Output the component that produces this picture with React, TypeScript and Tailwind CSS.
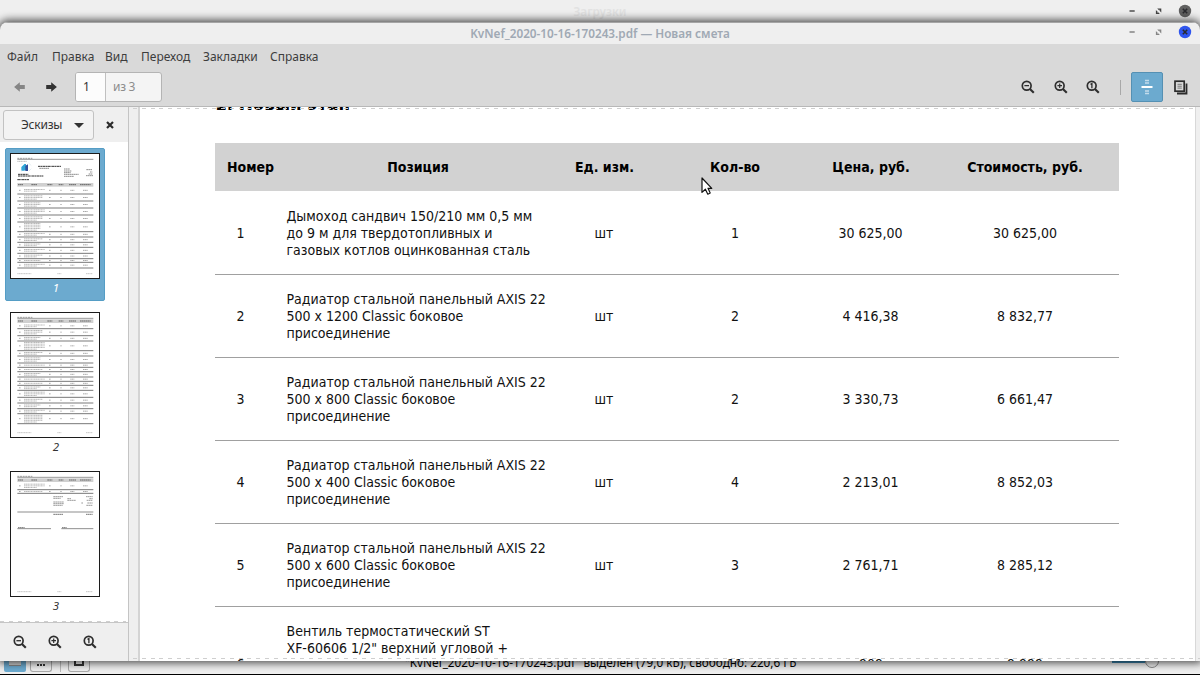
import type { ReactNode } from 'react';

interface Item {
  id: number;
  lines: string[];
  qty: string;
  price: string;
  total: string;
}

const items: Item[] = [
  { id: 1, lines: ['Дымоход сандвич 150/210 мм 0,5 мм', 'до 9 м для твердотопливных и', 'газовых котлов оцинкованная сталь'], qty: '1', price: '30 625,00', total: '30 625,00' },
  { id: 2, lines: ['Радиатор стальной панельный AXIS 22', '500 x 1200 Classic боковое', 'присоединение'], qty: '2', price: '4 416,38', total: '8 832,77' },
  { id: 3, lines: ['Радиатор стальной панельный AXIS 22', '500 x 800 Classic боковое', 'присоединение'], qty: '2', price: '3 330,73', total: '6 661,47' },
  { id: 4, lines: ['Радиатор стальной панельный AXIS 22', '500 x 400 Classic боковое', 'присоединение'], qty: '4', price: '2 213,01', total: '8 852,03' },
  { id: 5, lines: ['Радиатор стальной панельный AXIS 22', '500 x 600 Classic боковое', 'присоединение'], qty: '3', price: '2 761,71', total: '8 285,12' },
];

const menu = [
  { label: 'Файл', width: 'w-[31px]' },
  { label: 'Правка', width: 'w-[39px]' },
  { label: 'Вид', width: 'w-[22px]' },
  { label: 'Переход', width: 'w-[48px]' },
  { label: 'Закладки', width: 'w-[53px]' },
  { label: 'Справка', width: 'w-[46px]' },
];

const columns = 'grid grid-cols-[71px_264px_109px_152px_120px_188px]';

function ZoomIcon({ kind }: { kind: 'out' | 'in' | 'one' }) {
  return (
    <svg width="14" height="14" viewBox="0 0 14 14" fill="none" stroke="#2e2e2e">
      <circle cx="5.7" cy="5.7" r="4.4" strokeWidth="1.7" />
      <path d="M8.9 8.9L12.8 12.8" strokeWidth="2.1" />
      {kind === 'out' && <path d="M3.4 5.7H8" strokeWidth="1.3" />}
      {kind === 'in' && <path d="M3.4 5.7H8M5.7 3.4V8" strokeWidth="1.2" />}
      {kind === 'one' && <path d="M4.5 4.3L5.9 3.6V8.2" strokeWidth="1.3" />}
    </svg>
  );
}

function ArrowIcon({ className }: { className: string }) {
  return (
    <svg width="11" height="10" viewBox="0 0 11 10" className={className}>
      <path d="M0.1 5L5.8 0.2V3H10.8V7H5.8V9.8Z" fill="currentColor" />
    </svg>
  );
}

function WindowButtons({ active }: { active: boolean }) {
  const color = active ? '#858585' : '#444444';
  return (
    <svg width="64" height="14" viewBox="0 0 64 14" fill="none">
      <path d="M1.5 7H6.7" stroke={color} strokeWidth="1.4" />
      <path d="M29.2 4.5H33.3V8.6ZM27.9 5.9V9.9H31.9Z" fill={color} />
      <path d="M29.2 8.6L32 5.8" stroke="#efefef" strokeWidth="0.6" />
      <circle cx="57" cy="7" r="6.2" fill={active ? '#2f55ee' : '#606060'} />
      <path d="M54.8 4.8L59.2 9.2M59.2 4.8L54.8 9.2" stroke="#2a2a2e" strokeWidth="1.6" />
    </svg>
  );
}

interface ThumbRow {
  y: number;
  lines: number;
}

const pageOne: ThumbRow[] = [
  { y: 123, lines: 2 },
  { y: 144, lines: 3 },
  { y: 165, lines: 3 },
  { y: 186, lines: 3 },
  { y: 207, lines: 3 },
  { y: 236, lines: 5 },
  { y: 252, lines: 2 },
  { y: 268, lines: 2 },
  { y: 283, lines: 2 },
  { y: 301, lines: 2 },
  { y: 317, lines: 2 },
  { y: 328, lines: 1 },
  { y: 345, lines: 2 },
];

const pageTwo: ThumbRow[] = [
  { y: 50, lines: 2 },
  { y: 71, lines: 3 },
  { y: 87, lines: 2 },
  { y: 116, lines: 5 },
  { y: 132, lines: 2 },
  { y: 153, lines: 3 },
  { y: 166, lines: 1 },
  { y: 179, lines: 1 },
  { y: 195, lines: 2 },
  { y: 208, lines: 1 },
  { y: 220, lines: 1 },
  { y: 235, lines: 2 },
  { y: 256, lines: 3 },
  { y: 273, lines: 2 },
  { y: 290, lines: 2 },
  { y: 305, lines: 2 },
  { y: 335, lines: 5 },
];

const pageThree: ThumbRow[] = [
  { y: 56, lines: 3 },
  { y: 67, lines: 1 },
];

function Rows({ top, rows }: { top: number; rows: ThumbRow[] }) {
  return (
    <g>
      <rect x="22" y={top} width="228" height="11" fill="#d0d0d0" />
      <path d={`M24 ${top + 5}H39M64 ${top + 5}H82M112 ${top + 5}H127M146 ${top + 5}H160M177 ${top + 5}H198M210 ${top + 5}H242`} stroke="#666" strokeWidth="3" strokeDasharray="5 1" />
      {rows.map((row, index) => {
        const prev = index ? rows[index - 1].y : top + 11;
        const mid = (prev + row.y) / 2;
        return (
          <g key={row.y}>
            <rect x="22" y={row.y - 1.5} width="228" height="3" fill="#7a7a7a" />
            {Array.from({ length: row.lines }, (_, n) => (
              <path
                key={n}
                d={`M42 ${mid + (n - (row.lines - 1) / 2) * 5}h${n === row.lines - 1 && n > 0 ? 38 : 62 - (index % 3) * 6}`}
                stroke="#999"
                strokeWidth="2"
                strokeDasharray="5 1 3 1"
              />
            ))}
            <path d={`M27 ${mid}h6M117 ${mid}h6M151 ${mid}h4M181 ${mid}h12M219 ${mid}h15`} stroke="#aaa" strokeWidth="3" strokeDasharray="4 1" />
          </g>
        );
      })}
    </g>
  );
}

function Page({ children }: { children: ReactNode }) {
  return (
    <svg width="90" height="126" viewBox="0 0 270 378" className="block">
      <rect x="1.5" y="1.5" width="267" height="375" fill="#fff" stroke="#1c1c1c" strokeWidth="3" />
      <path d="M22 16H67" stroke="#777" strokeWidth="2" strokeDasharray="6 2" />
      <path d="M22 19H250" stroke="#666" strokeWidth="2" />
      <path d="M22 362H64M142 362H154M228 362H248" stroke="#aaa" strokeWidth="2" strokeDasharray="4 1" />
      {children}
    </svg>
  );
}

function Thumbnails() {
  return (
    <div className="flex h-[480px] flex-col overflow-hidden bg-white pl-[5px] pt-[6px] text-[11.5px] italic leading-[18px]">
      <div className="flex h-[153px] w-[100px] flex-col items-center rounded-[2px] border border-[#559dc5] bg-[#6caacf] pt-1 text-white">
        <Page>
          <path d="M22 25H50" stroke="#999" strokeWidth="2" strokeDasharray="4 1" />
          <path d="M34 42L44 32V53H34ZM44 33L48 33V52H44Z" fill="#31a6d8" />
          <path d="M46 38L54 34V54H46Z" fill="#314f9b" />
          <path d="M32 34L38 31M56 30L64 38M32 52L36 55M57 54L64 47" stroke="#d8e5ec" strokeWidth="2" />
          <path d="M84 40H154M24 64H55M24 69H100M22 80H57" stroke="#333" strokeWidth="3" strokeDasharray="8 1 4 1" />
          <path d="M88 46H118M162 48H179M162 54H184M162 59H182M162 64H206M162 70H192M229 50H247M240 57H247M236 63H247M228 68H249" stroke="#777" strokeWidth="2.5" strokeDasharray="5 1" />
          <Rows top={90} rows={pageOne} />
        </Page>
        <span className="pl-0.5">1</span>
      </div>
      <div className="mt-[11px] flex w-[100px] flex-col items-center text-[#333]">
        <Page>
          <Rows top={22} rows={pageTwo} />
        </Page>
        <span className="pl-0.5">2</span>
      </div>
      <div className="mt-[15px] flex w-[100px] flex-col items-center text-[#333]">
        <Page>
          <Rows top={22} rows={pageThree} />
          <path d="M130 77H160M130 82H152M130 93H162M130 98H162M130 103H158M172 83H184M172 88H198M228 77H248M238 83H248M230 88H248M214 96H219M232 96H248M229 103H248" stroke="#888" strokeWidth="2.5" strokeDasharray="5 1" />
          <rect x="22" y="121" width="228" height="4" fill="#aaa" />
          <path d="M130 130H160M228 130H248M24 170H44M156 170H170" stroke="#777" strokeWidth="3" strokeDasharray="5 1" />
          <path d="M22 173H123M154 173H250" stroke="#777" strokeWidth="2.5" />
        </Page>
        <span className="pl-0.5">3</span>
      </div>
    </div>
  );
}

function Sidebar() {
  return (
    <aside className="flex w-[129px] flex-col border-r border-[#c4c4c4]">
      <div className="flex h-[35px] items-center bg-[#efefef] pl-[3px] pt-px">
        <div className="flex h-[30px] w-[91px] items-center justify-between rounded-[3px] border border-[#c2c2c2] bg-[#f3f3f3] pl-[17px] pr-[9px] text-[12px] tracking-[-0.2px] text-[#333]">
          <span>Эскизы</span>
          <span className="border-x-[5px] border-t-[5px] border-x-transparent border-t-[#333]" />
        </div>
        <svg width="8" height="8" viewBox="0 0 8 8" className="ml-3 shrink-0">
          <path d="M1 1L7 7M7 1L1 7" stroke="#2b2b2b" strokeWidth="2.2" />
        </svg>
      </div>
      <Thumbnails />
      <div className="flex h-[39px] items-center gap-[21px] border-t border-[#c6c6c6] bg-[#efefef] pl-[13px]">
        <ZoomIcon kind="out" />
        <ZoomIcon kind="in" />
        <ZoomIcon kind="one" />
      </div>
    </aside>
  );
}

function EstimateTable() {
  return (
    <div className="w-[904px] font-['DejaVu_Sans_Condensed','DejaVu_Sans',sans-serif] text-[14px] leading-[17px] text-[#111] [font-stretch:condensed]">
      <div className={`${columns} mb-px h-12 items-center bg-[#d2d2d2] pt-px text-center font-bold text-black`}>
        <span>Номер</span>
        <span>Позиция</span>
        <span>Ед. изм.</span>
        <span>Кол-во</span>
        <span>Цена, руб.</span>
        <span>Стоимость, руб.</span>
      </div>
      {items.map((item) => (
        <div key={item.id} className={`${columns} h-[83px] items-center border-b border-[#a0a0a0] text-center`}>
          <span className="pr-5">{item.id}</span>
          <span className="whitespace-nowrap pl-[0.5px] text-left">
            {item.lines.map((line) => (
              <span key={line} className="block">{line}</span>
            ))}
          </span>
          <span className="pr-px">шт</span>
          <span>{item.qty}</span>
          <span className="pr-px">{item.price}</span>
          <span>{item.total}</span>
        </div>
      ))}
      <div className={`${columns} h-[115px] items-center text-center`}>
        <span className="pr-5">6</span>
        <span className="whitespace-nowrap pl-[0.5px] text-left">
          <span className="block">Вентиль термостатический ST</span>
          <span className="block">XF-60606 1/2" верхний угловой +</span>
          <span className="block h-[50px]" />
        </span>
        <span />
        <span>11</span>
        <span>909</span>
        <span>9 999</span>
      </div>
    </div>
  );
}

function Dashes({ className }: { className: string }) {
  return (
    <div className={`pointer-events-none absolute h-px bg-[repeating-linear-gradient(90deg,#cfcfcf_0px,#cfcfcf_4px,transparent_4px,transparent_8.8px)] ${className}`} />
  );
}

function Toolbar() {
  return (
    <div className="flex h-[38px] items-center border-b border-[#b8b8b8] bg-[#d9d9d9] pb-px pl-[14px] pr-3">
      <ArrowIcon className="text-[#868686]" />
      <ArrowIcon className="ml-[21px] rotate-180 text-[#333]" />
      <div className="ml-[18px] flex h-[30px] w-[87px] overflow-hidden rounded-[3px] border border-[#b4b4b4] bg-[#f4f4f4] text-[12px] leading-[28px]">
        <span className="w-[30px] border-r border-[#c0c0c0] bg-[#fcfcfc] pl-[7px] text-[#333]">1</span>
        <span className="pl-[7px] tracking-[-0.3px] text-[#8c8c8c]">из 3</span>
      </div>
      <div className="ml-auto flex items-center">
        <ZoomIcon kind="out" />
        <span className="ml-[19px]"><ZoomIcon kind="in" /></span>
        <span className="ml-[18px]"><ZoomIcon kind="one" /></span>
        <span className="ml-5 h-[15px] w-px bg-[#a8a8a8]" />
        <div className="ml-[10px] flex h-[30px] w-8 items-center justify-center rounded-[2px] border border-[#5590b3] bg-[#6caacf]">
          <svg width="12" height="16" viewBox="0 0 12 16">
            <path d="M0.5 8H11.5" stroke="#fff" strokeWidth="2" />
            <path d="M4 1.5H8M4 4H8M4 12H8M4 14.5H8" stroke="#c3dceb" strokeWidth="1.4" />
          </svg>
        </div>
        <svg width="14" height="15" viewBox="0 0 14 15" className="ml-[11px]" fill="none" stroke="#2b2b2b">
          <rect x="1" y="1.2" width="9.2" height="10" strokeWidth="1.7" />
          <path d="M12.5 3.5V13.5H3" strokeWidth="1.8" />
          <path d="M3.5 4.3H7.8M3.5 6.2H7.8M3.5 8.1H7.8" stroke="#777" />
        </svg>
      </div>
    </div>
  );
}

export default function App() {
  return (
    <div className="flex h-[675px] w-[1200px] flex-col overflow-hidden bg-[#efefef] font-['Noto_Sans','Open_Sans',sans-serif] text-[#444]">
      {/* Title bar of the file manager behind */}
      <div className="flex h-[22px] shrink-0 items-center bg-[#efefef] pr-2">
        <span className="w-[64px]" />
        <span className="flex-1 pl-2 pt-0.5 text-center text-[11.75px] font-semibold text-[#e2e2e2]">Загрузки</span>
        <span className="pb-px"><WindowButtons active={false} /></span>
      </div>

      {/* Document viewer */}
      <div className="relative z-10 flex h-[639px] shrink-0 flex-col overflow-hidden rounded-t-[8px] bg-[#efefef] shadow-[0_0_9px_2px_rgba(0,0,0,0.7)]">
        <div className="flex h-[22px] shrink-0 items-center border-t border-[#a5a5a5] pr-2">
          <span className="w-[64px]" />
          <span className="flex-1 pl-2 text-center text-[11.75px] font-semibold text-[#a0a9b4]">KvNef_2020-10-16-170243.pdf — Новая смета</span>
          <span className="pb-[3px]"><WindowButtons active /></span>
        </div>
        <div className="flex h-[25px] shrink-0 items-center gap-[14px] bg-[#d9d9d9] pl-[7px] text-[12px] text-[#3d3d3d]">
          {menu.map((entry) => (
            <span key={entry.label} className={`${entry.width} whitespace-nowrap`}>{entry.label}</span>
          ))}
        </div>
        <Toolbar />
        <div className="flex h-[554px] shrink-0">
          <Sidebar />
          <div className="w-[11px] border-r-2 border-[#d4d4d4] bg-[#efefef]" />
          <main className="h-[554px] w-[1056px] overflow-hidden border-r border-[#d8d8d8] bg-white pl-[75px]">
            <h2 className="-mt-[12px] h-[48px] font-['DejaVu_Sans_Condensed','DejaVu_Sans',sans-serif] text-[18.6px] font-bold leading-[18px] text-black [font-stretch:condensed]">1. Новый этап</h2>
            <EstimateTable />
          </main>
        </div>
        <Dashes className="left-[133px] right-1 top-[86px]" />
        <Dashes className="left-0 top-[599px] w-[126px]" />
        <Dashes className="bottom-0.5 left-[133px] right-0" />
      </div>

      {/* Status bar of the file manager behind */}
      <div className="flex h-[14px] shrink-0 overflow-hidden border-b border-black bg-[#efefef]">
        <div className="ml-1 h-[11px] w-[22px] rounded-b-[2px] bg-[#6caacf] px-[5px]">
          <div className="h-[5px] border-b border-[#888] bg-[#d0d0d0]" />
        </div>
        <div className="ml-1 h-[11px] w-[22px] rounded-b-[3px] border border-t-0 border-[#aaa] px-[6px]">
          <div className="h-[5px] border-b-2 border-dotted border-[#333]" />
        </div>
        <div className="ml-2 h-[11px] w-px bg-[#bbb]" />
        <div className="ml-[7px] h-[11px] w-[22px] rounded-b-[3px] border border-t-0 border-[#aaa] px-[5px]">
          <div className="h-[5px] border-2 border-t-0 border-[#333]" />
        </div>
        <span className="-mt-[8px] ml-[315px] w-[390px] whitespace-nowrap text-[11.75px] leading-[18px] text-black">"KvNef_2020-10-16-170243.pdf" выделен (79,0 кБ), свободно: 220,6 ГБ</span>
        <div className="ml-[317px] h-0.5 w-[33px] bg-[#3b85ae]" />
        <div className="-mt-[7px] h-[14px] w-[14px] rounded-full border border-[#888] bg-[#eee]" />
      </div>

      {/* Mouse pointer */}
      <svg width="13" height="19" viewBox="0 0 13 19" className="absolute left-[701px] top-[177px] z-20">
        <path d="M1 1V15.4L4.4 12.2L6.8 17.2L9.2 16L7 11.3H10.8Z" fill="#fff" stroke="#111" strokeWidth="1.2" strokeLinejoin="round" />
      </svg>
    </div>
  );
}
